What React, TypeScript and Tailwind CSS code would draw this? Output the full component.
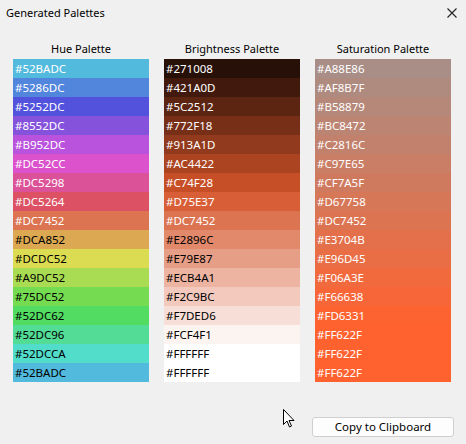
const hue = [
  "#52BADC", "#5286DC", "#5252DC", "#8552DC", "#B952DC", "#DC52CC", "#DC5298", "#DC5264", "#DC7452",
  "#DCA852", "#DCDC52", "#A9DC52", "#75DC52", "#52DC62", "#52DC96", "#52DCCA", "#52BADC",
];
const hueDark = 9; // rows from here use dark text

const brightness = [
  "#271008", "#421A0D", "#5C2512", "#772F18", "#913A1D", "#AC4422", "#C74F28", "#D75E37", "#DC7452",
  "#E2896C", "#E79E87", "#ECB4A1", "#F2C9BC", "#F7DED6", "#FCF4F1", "#FFFFFF", "#FFFFFF",
];
const brightDark = 9;

const saturation = [
  "#A88E86", "#AF8B7F", "#B58879", "#BC8472", "#C2816C", "#C97E65", "#CF7A5F", "#D67758", "#DC7452",
  "#E3704B", "#E96D45", "#F06A3E", "#F66638", "#FD6331", "#FF622F", "#FF622F", "#FF622F",
];

function Column({ title, colors, darkFrom }: { title: string; colors: string[]; darkFrom: number }) {
  return (
    <div className="flex w-[136px] flex-col">
      <div className="h-[20px] text-center text-[11px] leading-[20px] text-black">{title}</div>
      <div className="flex flex-col">
        {colors.map((c, i) => (
          <div
            key={i}
            className={`h-[19px] pl-[2px] text-[11.5px] leading-[19px] ${i >= darkFrom ? "text-black" : "text-white"}`}
            style={{ backgroundColor: c }}
          >
            {c}
          </div>
        ))}
      </div>
    </div>
  );
}

export default function App() {
  return (
    <div
      className="relative flex h-[444px] w-[466px] flex-col bg-[#f0f0f0] text-black"
      style={{ fontFamily: '"Noto Sans", "Open Sans", sans-serif' }}
    >
      <div className="flex h-[26px] items-center justify-between pl-[6px] pr-[9px]">
        <span className="text-[11px]">Generated Palettes</span>
        <svg width="10" height="10" viewBox="0 0 10 10" className="text-[#222]">
          <path d="M0.5 0.5 L9.5 9.5 M9.5 0.5 L0.5 9.5" stroke="currentColor" strokeWidth="1.1" />
        </svg>
      </div>

      <div className="mt-[13px] flex gap-[15px] pl-[13px]">
        <Column title="Hue Palette" colors={hue} darkFrom={hueDark} />
        <Column title="Brightness Palette" colors={brightness} darkFrom={brightDark} />
        <Column title="Saturation Palette" colors={saturation} darkFrom={99} />
      </div>

      <div className="mt-auto flex justify-end pb-[7px] pr-[12px]">
        <button className="h-[20px] w-[142px] rounded-[3px] border border-[#cfcfcf] bg-[#fdfdfd] text-[11.5px] leading-[18px] text-black">
          Copy to Clipboard
        </button>
      </div>

      {/* mouse pointer */}
      <svg className="absolute left-[283px] top-[409px]" width="13" height="20" viewBox="0 0 13 20">
        <path
          d="M0.5 0.5 L0.5 15.5 L4 12 L6.5 18 L8.5 17 L6 11.5 L11 11.5 Z"
          fill="#fff"
          stroke="#000"
          strokeWidth="1"
          strokeLinejoin="miter"
        />
      </svg>
    </div>
  );
}
